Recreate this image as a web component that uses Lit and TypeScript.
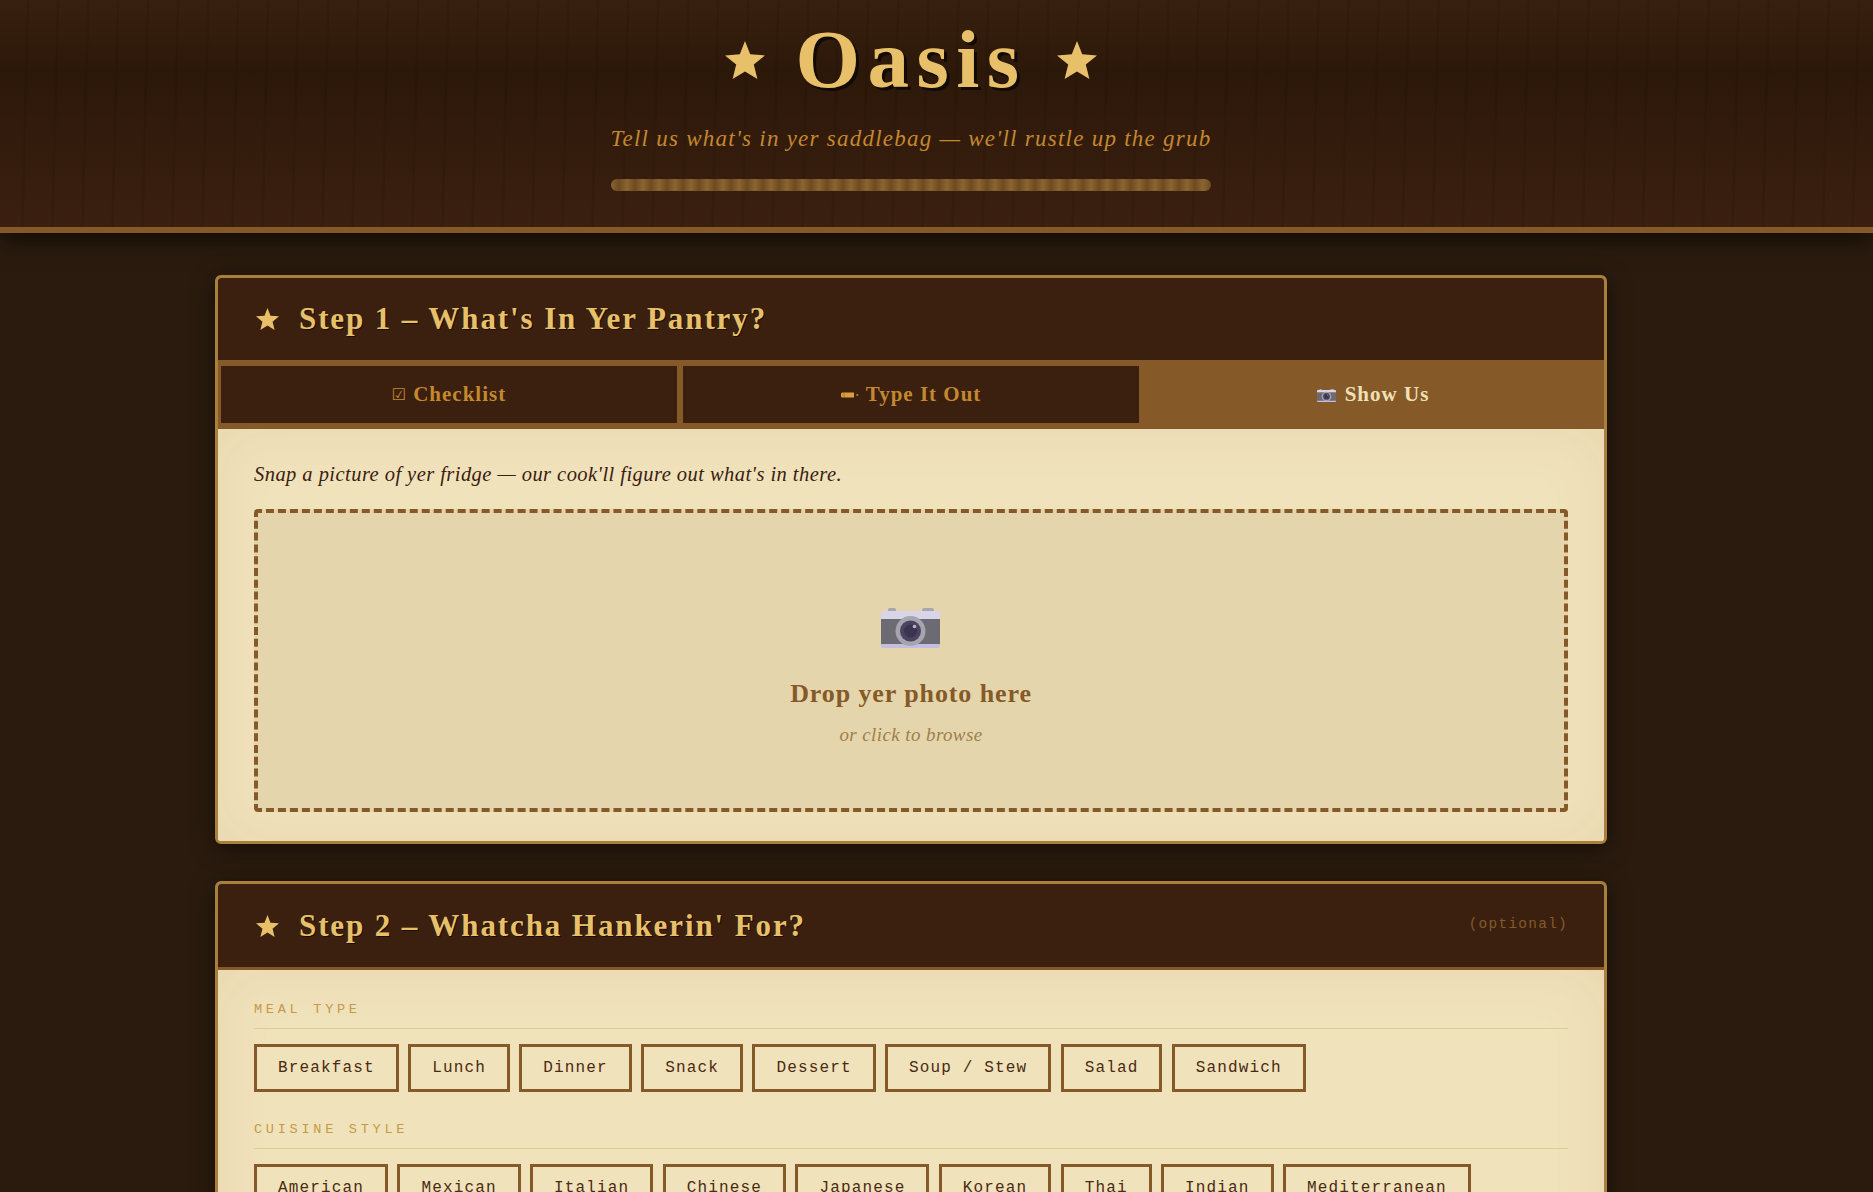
import { LitElement, html, css, svg } from "lit";
import { customElement } from "lit/decorators.js";

const star = (cls: string) => html`<svg class=${cls} viewBox="0 0 100 95" aria-hidden="true"><polygon points="50,0 63,33 100,36 72,59 81,95 50,76 19,95 28,59 0,36 37,33"/></svg>`;

const camera = (cls: string) => html`<svg class=${cls} viewBox="0 0 59 40" aria-hidden="true">${svg`
  <rect x="7" y="0" width="8" height="5" rx="2" fill="#a9a7ac"/>
  <rect x="41" y="0" width="12" height="5" rx="2" fill="#a9a7ac"/>
  <path d="M3 3h53a3 3 0 0 1 3 3v5H0V6a3 3 0 0 1 3-3z" fill="#d9d5e8"/>
  <rect x="0" y="11" width="59" height="26" fill="#6c6a72"/>
  <path d="M0 36h59v1.500a2.500 2.500 0 0 1-2.500 2.500h-54A2.500 2.500 0 0 1 0 37.500z" fill="#c4bde0"/>
  <circle cx="29.500" cy="23" r="15" fill="#a6a4ae"/>
  <circle cx="29.500" cy="23" r="10.500" fill="#4b4360"/>
  <circle cx="29.500" cy="23" r="6.500" fill="#3b3450"/>
  <circle cx="33.500" cy="18.500" r="1.800" fill="#b9b5c6"/>`}</svg>`;

const pencil = html`<svg class="pencil" viewBox="0 0 18 6" aria-hidden="true"><path d="M1.500 0.500H13v5H1.500A1.500 1.500 0 0 1 0 4V2A1.500 1.500 0 0 1 1.500 0.500z" fill="#d9a040"/><rect x="2.500" y="0.500" width="1" height="5" fill="#a8752a"/><path d="M13 0.500 18 3 13 5.500z" fill="#3b2010"/><path d="M15.500 1.800 18 3 15.500 4.200z" fill="#c4882f"/></svg>`;

const mealTypes = ["Breakfast", "Lunch", "Dinner", "Snack", "Dessert", "Soup / Stew", "Salad", "Sandwich"];
const cuisines = ["American", "Mexican", "Italian", "Chinese", "Japanese", "Korean", "Thai", "Indian", "Mediterranean"];

@customElement("app-root")
export class AppRoot extends LitElement {
  static styles = css`
    :host {
      display: block;
      height: 1192px;
      overflow: hidden;
      background: #2a1b0e;
      font-family: "Liberation Serif", serif;
    }
    .top {
      position: relative;
      z-index: 1;
      height: 227px;
      box-sizing: content-box;
      border-bottom: 6px solid #855a28;
      box-shadow: 0 6px 22px rgba(0, 0, 0, 0.6);
      background:
        repeating-linear-gradient(91.500deg, transparent 0, transparent 26px, rgba(20, 8, 0, 0.12) 27.500px, rgba(20, 8, 0, 0.12) 29px, transparent 30px),
        linear-gradient(180deg, #38200f 0%, #2c1809 32%, #3b2010 100%);
      display: flex;
      flex-direction: column;
      align-items: center;
      padding-right: 51px;
    }
    .brand {
      display: flex;
      align-items: center;
      gap: 30px;
      margin-top: 14px;
      height: 90px;
    }
    .brand-star {
      width: 40px;
      height: 38px;
      fill: #e8c069;
      margin-top: 2px;
    }
    h1 {
      margin: 0;
      font-family: "Liberation Serif", serif;
      font-weight: 700;
      font-size: 83px;
      line-height: 90px;
      letter-spacing: 7.500px;
      color: #e8c069;
      text-shadow: 3px 3px 0 #120a04;
    }
    .tag {
      margin: 20px 0 0;
      font-style: italic;
      font-size: 23px;
      line-height: 30px;
      letter-spacing: 1.250px;
      color: #c4882f;
    }
    .rope {
      width: 600px;
      height: 12px;
      margin-top: 25px;
      border-radius: 6px;
      background: repeating-linear-gradient(90deg, #8a6530 0, #6c4b20 8px, #8a6530 16px);
    }
    main {
      padding: 42px 51px 0 0;
      display: flex;
      flex-direction: column;
      align-items: center;
      gap: 37px;
    }
    .card {
      width: 1392px;
      box-sizing: border-box;
      border: 3px solid #a97f3c;
      border-radius: 6px;
      overflow: hidden;
      flex: none;
      background: #f0e2bb;
      box-shadow: 0 4px 22px rgba(0, 0, 0, 0.5);
    }
    .head {
      display: flex;
      align-items: center;
      height: 82px;
      padding: 0 36px 0 38px;
      background: #3b2010;
    }
    .head.ruled {
      height: 83px;
      border-bottom: 3px solid #855a28;
      box-sizing: content-box;
    }
    .head-star {
      width: 23px;
      height: 22px;
      fill: #e8c069;
      margin-right: 20px;
      flex: none;
    }
    h2 {
      margin: 0;
      flex: 1;
      font-family: "Liberation Serif", serif;
      font-weight: 700;
      font-size: 31px;
      line-height: 40px;
      letter-spacing: 1.900px;
      color: #e8c069;
      text-shadow: 1px 1px 0 #1a0e05;
    }
    .opt {
      font-family: "Liberation Mono", monospace;
      font-size: 14.400px;
      letter-spacing: 1.300px;
      color: #855a28;
      margin-top: -4px;
    }
    .tabs {
      display: grid;
      grid-template-columns: repeat(3, 1fr);
      gap: 6px;
      padding: 6px 3px;
      background: #855a28;
    }
    .tab {
      height: 57px;
      display: flex;
      align-items: center;
      justify-content: center;
      gap: 7px;
      background: #3b2010;
      color: #c4882f;
      font-weight: 700;
      font-size: 21px;
      letter-spacing: 1px;
    }
    .tab.on {
      background: #855a28;
      color: #f0e0b8;
    }
    .check {
      font-family: "DejaVu Sans", sans-serif;
      font-weight: 400;
      font-size: 16px;
      letter-spacing: 0;
    }
    .pencil {
      width: 18px;
      height: 6px;
    }
    .tab-cam {
      width: 19px;
      height: 13px;
      margin: 2px 2px 0 0;
    }
    .body {
      padding: 30px 36px 29px;
      background: #f0e2bb;
      box-shadow: inset 0 0 60px rgba(139, 90, 43, 0.07);
    }
    .desc {
      margin: 0 0 20px;
      font-style: italic;
      font-size: 20.500px;
      line-height: 30px;
      letter-spacing: 0.450px;
      color: #3b2010;
    }
    .drop {
      box-sizing: border-box;
      height: 303px;
      padding-top: 95px;
      border: 4px dashed #855a28;
      border-radius: 4px;
      background: #e4d5ac;
      display: flex;
      flex-direction: column;
      align-items: center;
    }
    .big-cam {
      width: 59px;
      height: 40px;
      flex: none;
      margin-right: 2px;
    }
    .drop-main {
      margin-top: 31px;
      font-weight: 700;
      font-size: 26px;
      line-height: 30px;
      letter-spacing: 0.900px;
      color: #855a28;
    }
    .drop-sub {
      margin-top: 14px;
      font-style: italic;
      font-size: 19px;
      line-height: 24px;
      letter-spacing: 0.400px;
      color: #a07f4a;
    }
    .body.pref {
      padding-top: 32px;
    }
    .label {
      font-family: "Liberation Mono", monospace;
      font-size: 13.600px;
      line-height: 16px;
      letter-spacing: 3.700px;
      color: #c49a48;
      padding-bottom: 10px;
      border-bottom: 1px solid #e3cb94;
      margin-bottom: 15px;
    }
    .chips {
      display: flex;
      flex-wrap: wrap;
      gap: 9.400px;
      margin-bottom: 30px;
    }
    .chip {
      box-sizing: border-box;
      height: 48px;
      padding: 0 21px 1px;
      display: flex;
      align-items: center;
      border: 3px solid #855a28;
      color: #4a2a12;
      font-family: "Liberation Mono", monospace;
      font-size: 16px;
      letter-spacing: 1.150px;
    }
  `;

  render() {
    return html`
      <header class="top">
        <div class="brand">
          ${star("brand-star")}
          <h1>Oasis</h1>
          ${star("brand-star")}
        </div>
        <p class="tag">Tell us what's in yer saddlebag — we'll rustle up the grub</p>
        <div class="rope"></div>
      </header>
      <main>
        <section class="card">
          <div class="head">
            ${star("head-star")}
            <h2>Step 1 – What's In Yer Pantry?</h2>
          </div>
          <div class="tabs">
            <div class="tab"><span class="check">☑</span><span>Checklist</span></div>
            <div class="tab">${pencil}<span>Type It Out</span></div>
            <div class="tab on">${camera("tab-cam")}<span>Show Us</span></div>
          </div>
          <div class="body">
            <p class="desc">Snap a picture of yer fridge — our cook'll figure out what's in there.</p>
            <div class="drop">
              ${camera("big-cam")}
              <div class="drop-main">Drop yer photo here</div>
              <div class="drop-sub">or click to browse</div>
            </div>
          </div>
        </section>
        <section class="card">
          <div class="head ruled">
            ${star("head-star")}
            <h2>Step 2 – Whatcha Hankerin' For?</h2>
            <span class="opt">(optional)</span>
          </div>
          <div class="body pref">
            <div class="label">MEAL TYPE</div>
            <div class="chips">${mealTypes.map((m) => html`<div class="chip">${m}</div>`)}</div>
            <div class="label">CUISINE STYLE</div>
            <div class="chips">${cuisines.map((m) => html`<div class="chip">${m}</div>`)}</div>
          </div>
        </section>
      </main>
    `;
  }
}
